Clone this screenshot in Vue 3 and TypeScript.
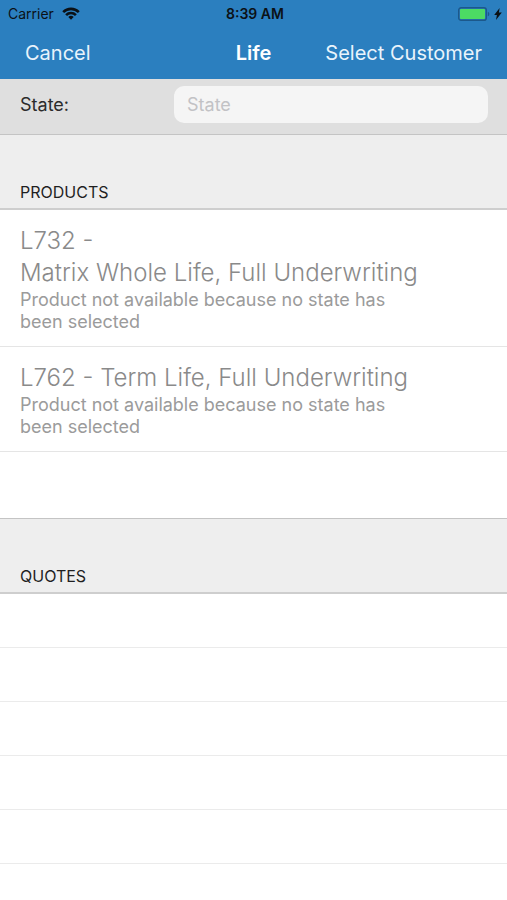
<script setup lang="ts">
import { ref } from 'vue'

interface Product {
  code: string
  name: string
  breakAfterCode: boolean
  note: string
}

const state = ref('')
const note = 'Product not available because no state has been selected'
const products: Product[] = [
  { code: 'L732 -', name: 'Matrix Whole Life, Full Underwriting', breakAfterCode: true, note },
  { code: 'L762 -', name: 'Term Life, Full Underwriting', breakAfterCode: false, note },
]
const emptyQuoteRows = 5
</script>

<template>
  <div class="screen">
    <header class="top">
      <div class="status">
        <div class="carrier">
          <span>Carrier</span>
          <svg class="wifi" viewBox="0 0 18 13" aria-hidden="true">
            <g fill="none" stroke="#0b1116" stroke-width="2.6">
              <path d="M1.2 5.1a11 11 0 0 1 15.6 0" />
              <path d="M4.1 8.1a6.9 6.9 0 0 1 9.8 0" />
            </g>
            <path d="M9 12.8 6.3 10.1a3.8 3.8 0 0 1 5.4 0z" fill="#0b1116" />
          </svg>
        </div>
        <span class="time">8:39 AM</span>
        <div class="power">
          <svg class="battery" viewBox="0 0 32 14" aria-hidden="true">
            <rect x="0.7" y="0.7" width="27.6" height="12.6" rx="2.4" fill="none" stroke="#1c588b" stroke-width="1.4" />
            <rect x="2" y="2" width="25" height="10" rx="1" fill="#4cdb64" />
            <path d="M29.8 4.7c2 .6 2 4 0 4.6z" fill="#1c588b" />
          </svg>
          <svg class="bolt" viewBox="0 0 8 12" aria-hidden="true">
            <path d="M5.6 0 .2 7h2.7L2 12l5.8-7.4H4.9z" fill="#0b1116" />
          </svg>
        </div>
      </div>
      <nav class="bar">
        <button type="button" class="action">Cancel</button>
        <h1 class="title">Life</h1>
        <button type="button" class="action end">Select Customer</button>
      </nav>
    </header>

    <main>
      <div class="field">
        <label for="state">State:</label>
        <input id="state" v-model="state" type="text" placeholder="State" />
      </div>

      <section>
        <h2 class="heading">PRODUCTS</h2>
        <ul class="list products">
          <li v-for="product in products" :key="product.code" class="product">
            <h3 class="name">{{ product.code }}<br v-if="product.breakAfterCode" />{{ ' ' + product.name }}</h3>
            <p class="note">{{ product.note }}</p>
          </li>
        </ul>
      </section>

      <section>
        <h2 class="heading">QUOTES</h2>
        <ul class="list">
          <li v-for="row in emptyQuoteRows" :key="row" class="quote"></li>
        </ul>
      </section>
    </main>
  </div>
</template>

<style>
body {
  background: #fff;
}
</style>

<style scoped>
.screen {
  font-family: Inter, 'Liberation Sans', sans-serif;
  color: #2b2b2b;
  background: #fff;
}

.top {
  background: #2b7fbf;
}

.status {
  display: grid;
  grid-template-columns: 1fr auto 1fr;
  align-items: center;
  height: 27px;
  padding: 0 5px 0 8px;
  font-size: 14px;
  color: #0b1116;
}

.carrier,
.power {
  display: flex;
  align-items: center;
}

.carrier {
  gap: 8px;
}

.power {
  justify-content: flex-end;
  gap: 4px;
}

.wifi {
  width: 18px;
  height: 13px;
}

.battery {
  width: 32px;
  height: 14px;
}

.bolt {
  width: 8px;
  height: 12px;
}

.time {
  font-weight: 600;
}

.bar {
  display: grid;
  grid-template-columns: 1fr auto 1fr;
  align-items: center;
  height: 52px;
  padding: 0 25px;
}

.action {
  justify-self: start;
  padding: 0;
  border: 0;
  background: none;
  font: inherit;
  font-size: 20px;
  line-height: 24px;
  color: #e9f4fc;
  white-space: nowrap;
}

.end {
  justify-self: end;
}

.title {
  margin: 0;
  font-size: 20px;
  line-height: 24px;
  font-weight: 600;
  color: #fff;
}

.field {
  display: grid;
  grid-template-columns: 154px 1fr;
  align-items: center;
  padding: 7px 19px 11px 20px;
  background: #dfdfdf;
  font-size: 18px;
}

.field input {
  box-sizing: border-box;
  width: 100%;
  height: 37px;
  padding: 0 13px;
  border: 0;
  border-radius: 10px;
  background: #f5f5f5;
  font: inherit;
  color: #2b2b2b;
}

.field input::placeholder {
  color: #c2c2c5;
  opacity: 1;
}

.heading {
  margin: 0;
  padding: 47px 20px 6px;
  border-top: 1px solid #c4c4c4;
  border-bottom: 2px solid #cecece;
  background: #eeeeee;
  font-size: 16px;
  line-height: 20px;
  font-weight: 400;
  color: #1f1f1f;
}

.list {
  margin: 0;
  padding: 0;
  list-style: none;
}

.products {
  padding-bottom: 66px;
}

.product {
  padding: 15px 100px 13px 20px;
  border-bottom: 1px solid #e5e5e5;
  color: #9b9b9b;
}

.name {
  margin: 0;
  font-size: 24px;
  line-height: 32px;
  font-weight: 300;
  color: #8a8a8a;
  white-space: nowrap;
}

.note {
  margin: 0;
  font-size: 18px;
  line-height: 22px;
}

.quote {
  height: 53px;
  border-bottom: 1px solid #ebebeb;
}
</style>
